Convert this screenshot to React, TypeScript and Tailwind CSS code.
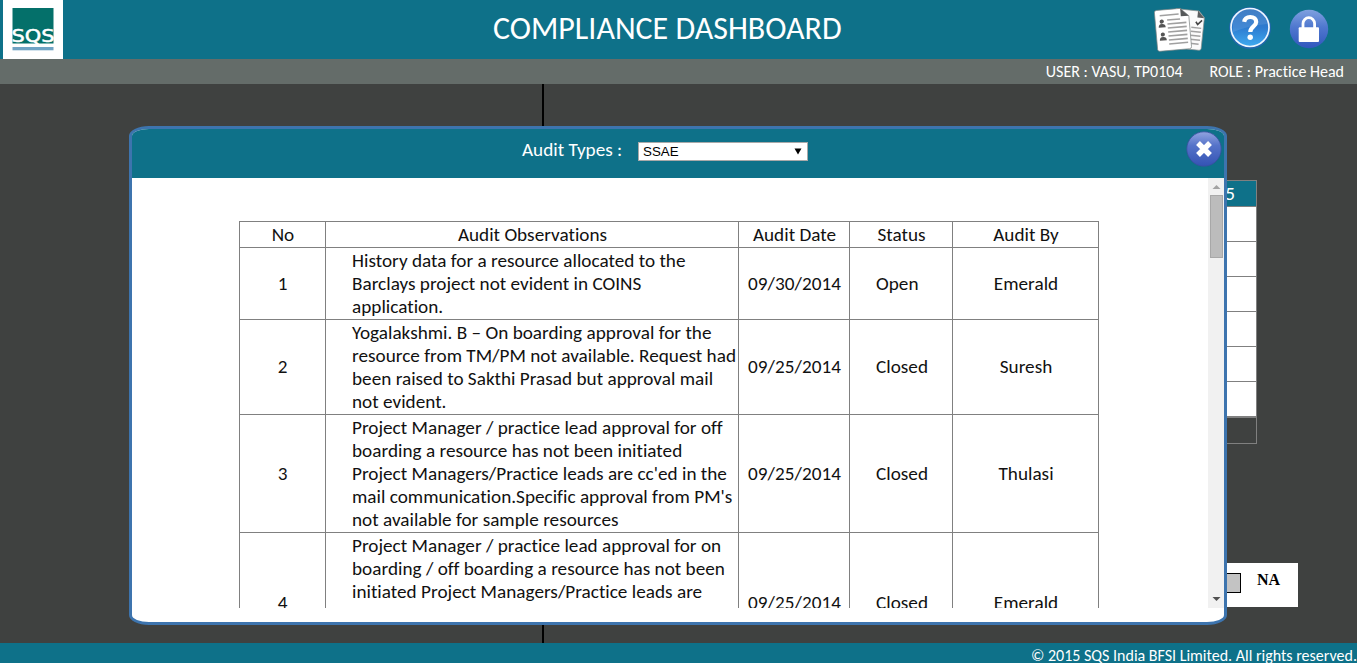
import type { ReactNode } from 'react';

type Audit = {
  no: number;
  lines: string[];
  date: string;
  status: string;
  by: string;
  height: string;
};

const audits: Audit[] = [
  {
    no: 1,
    lines: [
      'History data for a resource allocated to the',
      'Barclays project not evident in COINS',
      'application.',
    ],
    date: '09/30/2014',
    status: 'Open',
    by: 'Emerald',
    height: 'h-[72px]',
  },
  {
    no: 2,
    lines: [
      'Yogalakshmi. B – On boarding approval for the',
      'resource from TM/PM not available. Request had',
      'been raised to Sakthi Prasad but approval mail',
      'not evident.',
    ],
    date: '09/25/2014',
    status: 'Closed',
    by: 'Suresh',
    height: 'h-[95px]',
  },
  {
    no: 3,
    lines: [
      'Project Manager / practice lead approval for off',
      'boarding a resource has not been initiated',
      "Project Managers/Practice leads are cc'ed in the",
      "mail communication.Specific approval from PM's",
      'not available for sample resources',
    ],
    date: '09/25/2014',
    status: 'Closed',
    by: 'Thulasi',
    height: 'h-[118px]',
  },
  {
    no: 4,
    lines: [
      'Project Manager / practice lead approval for on',
      'boarding / off boarding a resource has not been',
      'initiated Project Managers/Practice leads are',
    ],
    date: '09/25/2014',
    status: 'Closed',
    by: 'Emerald',
    height: 'h-[141px]',
  },
];

function SqsLogo() {
  return (
    <svg width="60" height="59" viewBox="0 0 60 59" className="ml-[3px] shrink-0 bg-white">
      <rect x="9.5" y="8" width="41" height="35.5" fill="#04706a" />
      <text
        x="8.5"
        y="42"
        textLength="43"
        lengthAdjust="spacingAndGlyphs"
        fontFamily="DejaVu Sans"
        fontSize="18"
        fill="#fff"
        stroke="#fff"
        strokeWidth=".5"
      >
        SQS
      </text>
      <rect x="9.5" y="47" width="41" height="3.3" fill="#6fa3c4" />
    </svg>
  );
}

function DocumentsIcon() {
  return (
    <svg width="52" height="46" viewBox="0 0 52 46">
      <g transform="rotate(6 34 24)">
        <path d="M20 4H43L49 10V41Q49 43 47 43H22Q20 43 20 41Z" fill="#fbfbfb" stroke="#8b9190" strokeWidth=".7" />
        <path d="M42 3.5V10.5H49Z" fill="#5c5f60" />
        <path d="M41 15L43 17.5L47 13" fill="none" stroke="#444" strokeWidth="1.6" />
        <path d="M37 21H47M37 25H47M37 29H47M37 33H47M37 37H46" stroke="#a2a2a2" strokeWidth="1.5" />
      </g>
      <g transform="rotate(-5 20 24)">
        <path d="M4 3H28L36 11V42Q36 44 34 44H4Q2 44 2 42V5Q2 3 4 3Z" fill="#fff" stroke="#7d8585" strokeWidth=".7" />
        <path d="M28 3V11H36Z" fill="#555859" />
        <path
          d="M7 8.5H26M14 13.5H27M14 17.5H33M14 21.5H33M14 25.5H33M14 29.5H33M14 33.5H33M14 37.5H33"
          stroke="#a0a0a0"
          strokeWidth="1.6"
        />
        <circle cx="8.5" cy="14.5" r="2.1" fill="#555" />
        <path d="M5 20.5Q5 17 8.5 17T12 20.5Z" fill="#555" />
        <circle cx="8.5" cy="27.5" r="2.1" fill="#555" />
        <path d="M5 33.5Q5 30 8.5 30T12 33.5Z" fill="#555" />
      </g>
    </svg>
  );
}

function HelpIcon() {
  return (
    <svg width="44" height="44" viewBox="0 0 44 44">
      <defs>
        <linearGradient id="help" x1="0" y1="0" x2="0" y2="1">
          <stop offset="0" stopColor="#2b6fbd" />
          <stop offset=".5" stopColor="#2d7bd0" />
          <stop offset="1" stopColor="#3faaf0" />
        </linearGradient>
      </defs>
      <circle cx="22" cy="22" r="21" fill="#2167ac" />
      <circle cx="22" cy="21.5" r="19" fill="url(#help)" stroke="#eef6ff" strokeWidth="1.7" />
      <path d="M5 20A17 17 0 0 1 39 18Q23 19 5 26Z" fill="#fff" opacity=".1" />
      <path
        d="M16.2 15.8C16.8 12.4 19.2 11 22.2 11C26 11 28.2 13 28.2 16C28.2 20.5 22.3 20.3 22.3 26"
        fill="none"
        stroke="#fff"
        strokeWidth="4.2"
      />
      <circle cx="22.2" cy="31.2" r="2.7" fill="#fff" />
    </svg>
  );
}

function LockIcon() {
  return (
    <svg width="40" height="40" viewBox="0 0 40 40">
      <defs>
        <linearGradient id="lock" x1="0" y1="0" x2="0" y2="1">
          <stop offset="0" stopColor="#7fa0df" />
          <stop offset=".45" stopColor="#4f78cf" />
          <stop offset="1" stopColor="#3157bd" />
        </linearGradient>
      </defs>
      <circle cx="20" cy="20" r="19.2" fill="url(#lock)" />
      <path d="M14 19V14.5A5.8 5.8 0 0 1 25.6 14.5V19" fill="none" stroke="#fff" strokeWidth="2.8" />
      <rect x="9.7" y="18.2" width="20.3" height="14.8" rx="1" fill="#fff" />
    </svg>
  );
}

function CloseIcon() {
  return (
    <svg width="36" height="36" viewBox="0 0 36 36">
      <defs>
        <linearGradient id="close" x1="0" y1="0" x2="0" y2="1">
          <stop offset="0" stopColor="#92a4df" />
          <stop offset=".4" stopColor="#5573c9" />
          <stop offset="1" stopColor="#3453b4" />
        </linearGradient>
      </defs>
      <circle cx="18" cy="18" r="17.2" fill="url(#close)" stroke="#3a4f9f" strokeWidth=".8" />
      <path d="M12 12L24 24M24 12L12 24" stroke="#fff" strokeWidth="5.4" />
    </svg>
  );
}

function HeadCell({ children, width }: { children: ReactNode; width: string }) {
  return <th className={`border border-[#808080] p-px pl-0.5 font-normal ${width}`}>{children}</th>;
}

function BackgroundPage() {
  return (
    <div className="flex h-full">
      <div className="box-content w-[542px] border-r-2 border-black" />
      <div className="flex w-[754px] flex-col">
        <div className="mt-24 mr-[41px] border border-[#808080]">
          <div className="flex h-[25px] items-center justify-end bg-[#0e7189] pr-[21px] text-[19.2px] leading-[23px] text-white">
            2015
          </div>
          {[1, 2, 3, 4, 5, 6].map((row) => (
            <div key={row} className="h-[35px] border-t border-[#808080] bg-white" />
          ))}
          <div className="h-[27px] border-t-2 border-[#808080]" />
        </div>
        <div className="mt-[119px] flex h-11 items-start justify-end bg-white pt-[7px] pr-[18px]">
          <div className="mt-[3px] mr-4 h-5 w-[30px] border border-black bg-[#c3c3c3]" />
          <span className="font-['Liberation_Serif',serif] text-base leading-5 font-bold text-black">NA</span>
        </div>
      </div>
    </div>
  );
}

function AuditTable() {
  return (
    <table className="mt-[43px] ml-[107px] w-[860px] table-fixed border-collapse text-[19.2px] leading-[23px] tracking-[0.015px] text-[#111]">
      <thead>
        <tr className="h-[26px]">
          <HeadCell width="w-[86px]">No</HeadCell>
          <HeadCell width="w-[413px]">Audit Observations</HeadCell>
          <HeadCell width="w-[111px]">Audit Date</HeadCell>
          <HeadCell width="w-[103px]">Status</HeadCell>
          <HeadCell width="w-[146px]">Audit By</HeadCell>
        </tr>
      </thead>
      <tbody>
        {audits.map((audit) => (
          <tr key={audit.no} className={audit.height}>
            <td className="border border-[#808080] p-px pb-0.5 text-center">{audit.no}</td>
            <td className="border border-[#808080] p-px pl-[26px] align-top">
              {audit.lines.map((line) => (
                <div key={line} className="whitespace-nowrap">
                  {line}
                </div>
              ))}
            </td>
            <td className="border border-[#808080] p-px pb-0.5 pl-0.5 text-center">{audit.date}</td>
            <td className="border border-[#808080] p-px pb-0.5 pl-[26px]">{audit.status}</td>
            <td className="border border-[#808080] p-px pb-0.5 pl-0.5 text-center">{audit.by}</td>
          </tr>
        ))}
      </tbody>
    </table>
  );
}

function Scrollbar() {
  return (
    <div className="flex w-4 flex-col items-center bg-[#f1f1f1]">
      <svg width="16" height="17" viewBox="0 0 16 17">
        <path d="M4.5 11L8.5 7L12.5 11Z" fill="#a3a3a3" />
      </svg>
      <div className="ml-px h-[63px] w-[13px] border border-[#a8a8a8] bg-[#bcbcbc]" />
      <svg width="16" height="17" viewBox="0 0 16 17" className="mt-auto">
        <path d="M4.5 6L8.5 10L12.5 6Z" fill="#505050" />
      </svg>
    </div>
  );
}

export default function App() {
  return (
    <div className="flex h-[663px] w-[1357px] flex-col overflow-hidden bg-[#3f4140] font-[Carlito,Calibri,Lato,sans-serif] [font-variant-ligatures:none]">
      <header className="flex h-[59px] shrink-0 bg-[#0e7189]">
        <SqsLogo />
        <h1 className="w-[1091px] pt-[9px] pl-[430px] text-[32px] leading-[39px] whitespace-nowrap text-white">
          COMPLIANCE DASHBOARD
        </h1>
        <div className="flex items-start">
          <div className="mt-[6px] w-[74px]">
            <DocumentsIcon />
          </div>
          <div className="mt-[6px] w-[61px]">
            <HelpIcon />
          </div>
          <div className="mt-[9px]">
            <LockIcon />
          </div>
        </div>
      </header>
      <div className="flex h-[25px] shrink-0 items-center justify-end gap-[27px] bg-[#646c69] pr-[13px] text-base leading-5 text-white">
        <span>USER : VASU, TP0104</span>
        <span>ROLE : Practice Head</span>
      </div>
      <main className="relative h-[559px] shrink-0">
        <BackgroundPage />
        <section className="absolute top-[42px] left-[129px] flex h-[499px] w-[1098px] flex-col overflow-hidden rounded-[20px/10px] border-3 border-[#3d74ae] bg-white">
          <div className="flex h-[49px] shrink-0 bg-[#0e7189]">
            <span className="w-[506px] pt-[9px] pl-[390px] text-[19.2px] leading-[23px] whitespace-nowrap text-white">
              Audit Types :
            </span>
            <div className="mt-[13px] flex h-[19px] w-[170px] items-center justify-between border border-[#a9a9a9] bg-white pr-[5px] pl-1 font-['Liberation_Sans',sans-serif] text-[13.33px] leading-4 text-black">
              <span>SSAE</span>
              <svg width="8" height="7" viewBox="0 0 8 7">
                <path d="M.5 .5H7.5L4 6.5Z" fill="#000" />
              </svg>
            </div>
            <div className="mt-[2px] mr-[2px] ml-auto">
              <CloseIcon />
            </div>
          </div>
          <div className="flex h-[430px] justify-between overflow-hidden">
            <AuditTable />
            <Scrollbar />
          </div>
        </section>
      </main>
      <footer className="h-5 shrink-0 bg-[#0e7189] pt-[3px] text-right text-base leading-5 text-white">
        © 2015 SQS India BFSI Limited. All rights reserved.
      </footer>
    </div>
  );
}
